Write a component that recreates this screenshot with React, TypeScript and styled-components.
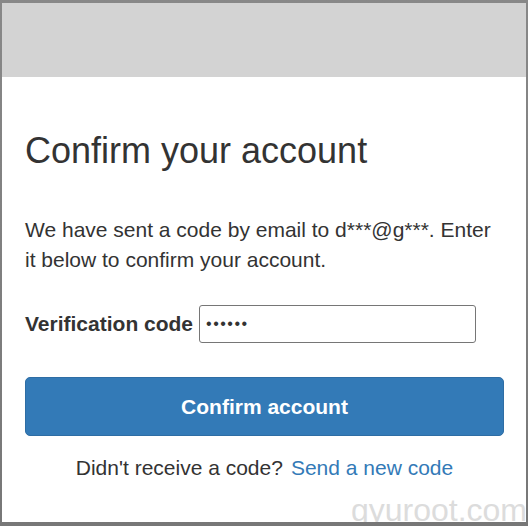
import styled, { createGlobalStyle } from "styled-components";

const GlobalStyle = createGlobalStyle`
  html, body {
    margin: 0;
    padding: 0;
    background: #7d7d7d;
  }
  body {
    font-family: "Liberation Sans", Arial, sans-serif;
    color: #333;
  }
`;

const Frame = styled.div`
  width: 528px;
  height: 526px;
  box-sizing: border-box;
  padding: 3px 2px 4px 2px;
  background: linear-gradient(#888, #777);
`;

const Card = styled.div`
  position: relative;
  height: 100%;
  background: #fff;
  overflow: hidden;
  display: flex;
  flex-direction: column;
`;

const Banner = styled.div`
  height: 74px;
  background: #d3d3d3;
  flex-shrink: 0;
`;

const Body = styled.div`
  padding: 52px 22px 0 23px;
  display: flex;
  flex-direction: column;
`;

const Title = styled.h1`
  margin: 0;
  font-size: 36px;
  font-weight: 400;
  line-height: 44px;
  color: #333;
`;

const Message = styled.p`
  margin: 42px 0 0;
  font-size: 21px;
  line-height: 30px;
  color: #333;
`;

const Field = styled.div`
  display: flex;
  align-items: center;
  gap: 6px;
  margin-top: 30px;
`;

const Label = styled.label`
  font-size: 21px;
  font-weight: 700;
  color: #333;
  white-space: nowrap;
`;

const CodeInput = styled.input`
  width: 277px;
  height: 38px;
  box-sizing: border-box;
  border: 1px solid #767676;
  border-radius: 3px;
  padding: 0 6px;
  font-family: "Liberation Sans", Arial, sans-serif;
  font-size: 16px;
  letter-spacing: 1.5px;
  color: #333;
  outline: none;
`;

const PrimaryButton = styled.button`
  margin-top: 34px;
  height: 59px;
  width: 100%;
  border: 1px solid #2e6da4;
  border-radius: 5px;
  background: #337ab7;
  color: #fff;
  font-family: "Liberation Sans", Arial, sans-serif;
  font-size: 21px;
  font-weight: 700;
  cursor: pointer;
`;

const Resend = styled.div`
  margin-top: 20px;
  text-align: center;
  font-size: 21px;
  color: #333;
`;

const ResendLink = styled.a`
  color: #337ab7;
  text-decoration: none;
  margin-left: 8px;
`;

const Watermark = styled.div`
  position: absolute;
  right: -1px;
  bottom: -6px;
  font-size: 32px;
  line-height: 36px;
  color: #dcdcdc;
  pointer-events: none;
`;

export default function App() {
  return (
    <Frame>
      <GlobalStyle />
      <Card>
        <Banner />
        <Body>
          <Title>Confirm your account</Title>
          <Message>
            We have sent a code by email to d***@g***. Enter it below to confirm
            your account.
          </Message>
          <Field>
            <Label htmlFor="code">Verification code</Label>
            <CodeInput id="code" type="password" defaultValue="123456" />
          </Field>
          <PrimaryButton>Confirm account</PrimaryButton>
          <Resend>
            Didn't receive a code?
            <ResendLink href="#">Send a new code</ResendLink>
          </Resend>
        </Body>
        <Watermark>gyuroot.com</Watermark>
      </Card>
    </Frame>
  );
}
